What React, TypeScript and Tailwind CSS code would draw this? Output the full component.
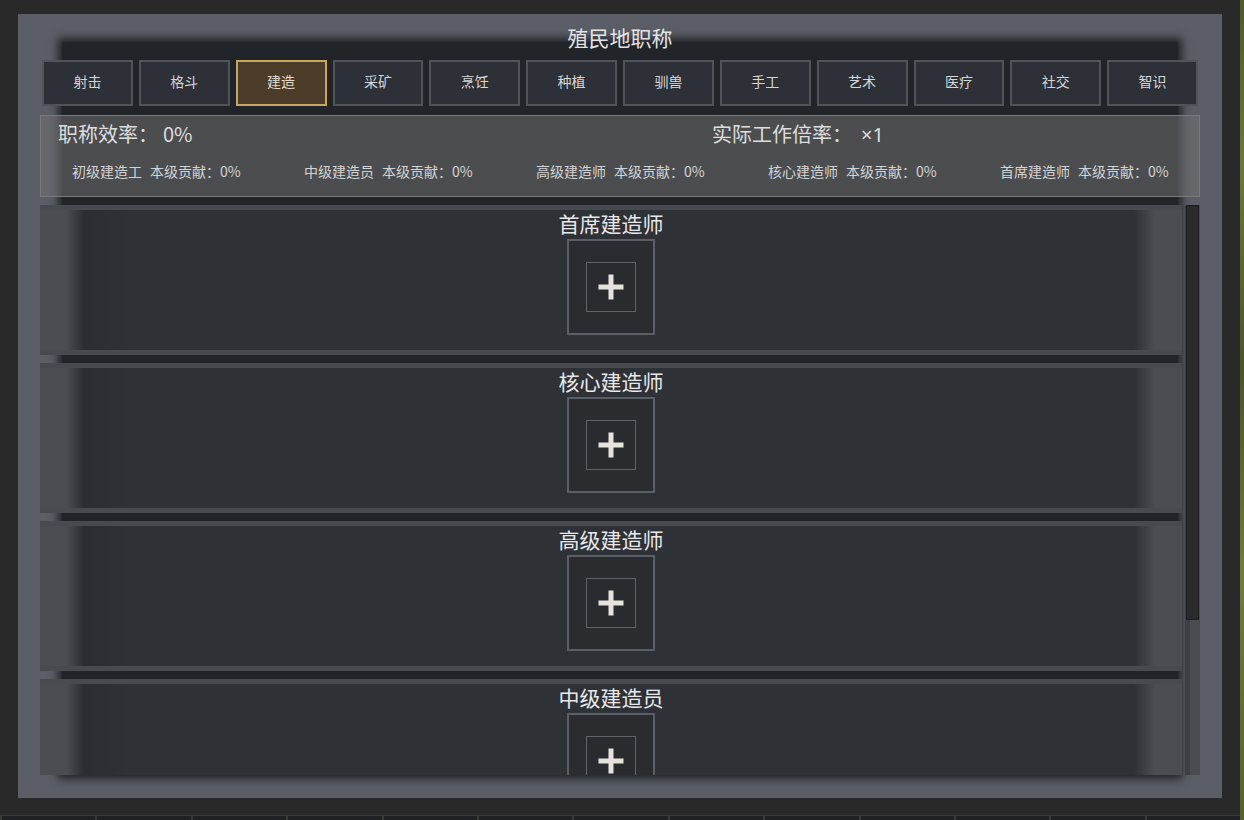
import React from 'react';

const TABS = ['射击', '格斗', '建造', '采矿', '烹饪', '种植', '驯兽', '手工', '艺术', '医疗', '社交', '智识'];
const LEVELS = ['初级建造工', '中级建造员', '高级建造师', '核心建造师', '首席建造师'];
const SLOTS = ['首席建造师', '核心建造师', '高级建造师', '中级建造员'];

const PlusIcon = () => (
  <svg width="28" height="28" viewBox="0 0 28 28">
    <rect x="11.5" y="1.5" width="5" height="25" fill="#e6e3dc" />
    <rect x="1.5" y="11.5" width="25" height="5" fill="#e6e3dc" />
  </svg>
);

const SlotCard = ({ title }: { title: string; key?: React.Key }) => (
  <div className="h-[150px] shrink-0 border-y-[5px] border-[#474a4f] bg-[linear-gradient(to_right,#4a4d52_0px,#4a4d52_26px,#2a2d31_44px,#2e3136_90px,#2e3136_calc(100%_-_48px),#4a4d52_calc(100%_-_27px),#4a4d52_100%)] flex flex-col items-center">
    <div className="pt-[1px] text-[21px] leading-[24px] text-[#e8e8e8]">{title}</div>
    <div className="mt-[4px] w-[88px] h-[96px] border-2 border-[#5a5e66] bg-[#2a2c30] flex items-center justify-center">
      <div className="w-[50px] h-[50px] border-[1.5px] border-[#5f636a] bg-[#2a2b2f] flex items-center justify-center">
        <PlusIcon />
      </div>
    </div>
  </div>
);

export default function App() {
  return (
    <div className="w-[1244px] h-[820px] bg-[#2a2929] flex font-['Noto_Sans_CJK_SC',sans-serif] overflow-hidden">
      <div className="w-[1240px] flex flex-col">
        <div className="pl-[18px] pt-[14px]">
          <div className="w-[1204px] h-[784px] bg-[#5b5e66] px-[22px] pt-[28px]">
            <div className="mx-[22px] bg-[#212428] shadow-[0_0_8px_4px_#212428] flex flex-col">
              <div className="-mt-[17px] text-center text-[21px] leading-[24px] text-[#e4e4e4]">殖民地职称</div>

              {/* work type tabs */}
              <div className="-mx-[20px] mt-[11px] grid grid-cols-12 gap-[6px]">
                {TABS.map((t) => (
                  <div
                    key={t}
                    className={
                      t === '建造'
                        ? 'h-[46px] pb-[3px] border-2 border-[#c9a55e] bg-[#4b3d29] flex items-center justify-center text-[14px] text-[#e2dccf]'
                        : 'h-[46px] pb-[3px] border-2 border-[#4f535a] bg-[#2d3036] flex items-center justify-center text-[14px] text-[#d6d6d6]'
                    }
                  >
                    {t}
                  </div>
                ))}
              </div>

              {/* efficiency summary */}
              <div className="-mx-[22px] mt-[9px] h-[82px] border border-[#7a7a7a] bg-[rgba(112,112,112,0.55)] text-[#dedede]">
                <div className="flex pl-[17px] pt-[4px] text-[20px] leading-[28px]">
                  <span className="w-[654px]">
                    职称效率：<span className="ml-[5px]">0%</span>
                  </span>
                  <span>
                    实际工作倍率：<span className="ml-[9px] font-['Noto_Sans',sans-serif]">×1</span>
                  </span>
                </div>
                <div className="grid grid-cols-[repeat(5,232px)] pl-[31px] mt-[12px] text-[14px] leading-[20px] text-[#d4d4d4]">
                  {LEVELS.map((l) => (
                    <div key={l} className="flex gap-[8px] whitespace-nowrap">
                      <span>{l}</span>
                      <span>本级贡献：0%</span>
                    </div>
                  ))}
                </div>
              </div>

              {/* slot list with scrollbar */}
              <div className="-mx-[22px] mt-[8px] h-[570px] flex gap-[3px]">
                <div className="w-[1142px] h-full overflow-hidden flex flex-col gap-[8px]">
                  {SLOTS.map((s) => (
                    <SlotCard key={s} title={s} />
                  ))}
                </div>
                <div className="w-[15px] h-full bg-[linear-gradient(to_right,#3d3f44_0px,#3d3f44_5px,#4a4c51_5px)] pl-[1px] pr-[1px]">
                  <div className="h-[415px] bg-[#2b2a2c] border border-[#1d1d1f]" />
                </div>
              </div>
            </div>
          </div>
        </div>

        {/* bottom bar */}
        <div className="mt-[17px] h-[5px] flex border-t border-[#3a3a3a]">
          {Array.from({ length: 13 }).map((_, i) => (
            <div key={i} className="w-[101px] h-full bg-[#1f2124] border-l-2 border-[#393939]" />
          ))}
        </div>
      </div>
      <div className="w-[4px] h-full bg-[linear-gradient(to_bottom,#4c5a28,#6b7a33_20%,#4a5526_45%,#707d35_70%,#55622b)]" />
    </div>
  );
}
